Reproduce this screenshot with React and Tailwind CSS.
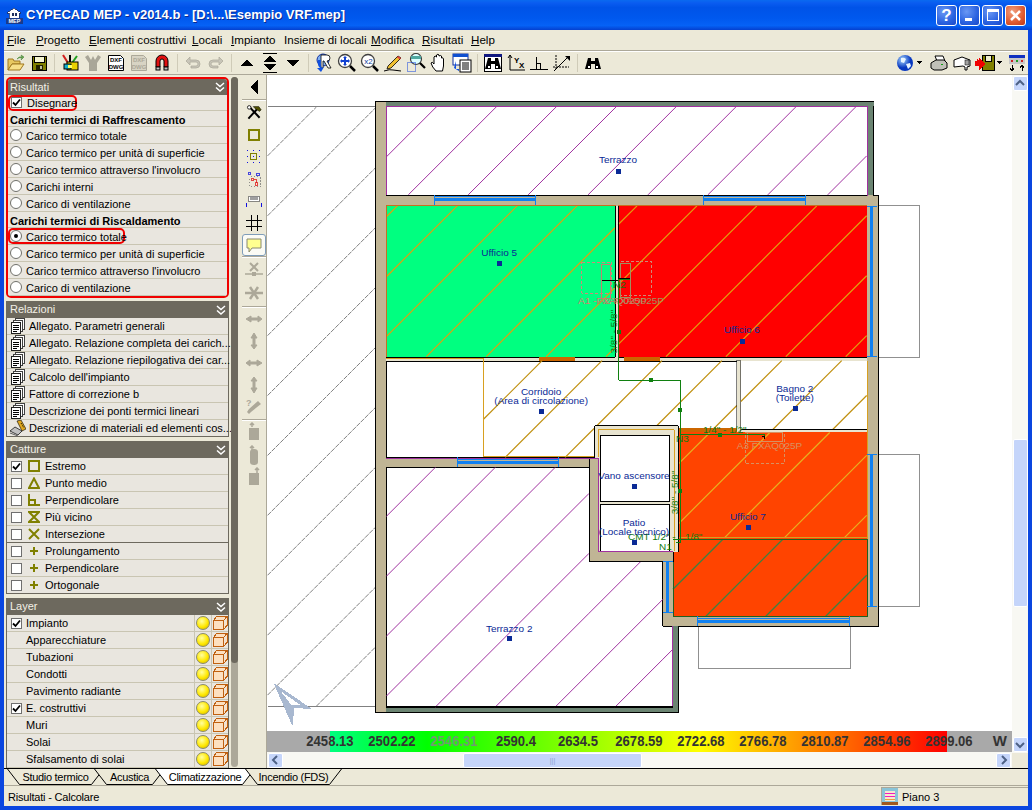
import React from 'react';

const Ico = ({ children, w = 18, h = 18, vb }) => (
  <svg width={w} height={h} viewBox={vb || `0 0 ${w} ${h}`} shapeRendering="crispEdges" className="block shrink-0">
    {children}
  </svg>
);

const Smooth = ({ children, w = 18, h = 18, vb }) => (
  <svg width={w} height={h} viewBox={vb || `0 0 ${w} ${h}`} className="block shrink-0">
    {children}
  </svg>
);

/* top toolbar */
const Folder = () => (
  <Smooth>
    <path d="M1 5h5l1 2h6v3H5L1 16z" fill="#e8c860" stroke="#a07820" />
    <path d="M5 10h12l-4 6H1z" fill="#f8e088" stroke="#a07820" />
    <path d="M10 5q2-3 5-2l-1-2 3 2-3 3 1-2q-3-1-5 1z" fill="#6aa84f" stroke="#3a7a30" strokeWidth="0.5" />
  </Smooth>
);
const Floppy = () => (
  <Ico w={16} h={16}>
    <rect x="1" y="1" width="14" height="14" fill="#808000" stroke="#000" />
    <rect x="3" y="1" width="10" height="6" fill="#f4f4d0" stroke="#000" />
    <rect x="5" y="10" width="7" height="5" fill="#202000" />
    <rect x="9" y="11" width="2" height="3" fill="#c0c0a0" />
  </Ico>
);
const Tools = () => (
  <Smooth>
    <path d="M2 1l5 8" stroke="#d02020" strokeWidth="2" />
    <path d="M9 1v8" stroke="#000" strokeWidth="2" />
    <path d="M16 2l-5 7" stroke="#20a020" strokeWidth="2" />
    <rect x="6" y="8" width="11" height="8" fill="#e8d000" stroke="#000" />
    <rect x="3" y="10" width="7" height="5" fill="#10b0d0" stroke="#000" />
    <rect x="7" y="11" width="4" height="3" fill="#ffff60" />
  </Smooth>
);
const Shirt = () => (
  <Smooth>
    <path d="M1 3l3-2 3 5 2-4 2 4 3-5 3 2-4 6v8H5V9z" fill="#a9a698" />
  </Smooth>
);
const DocText = ({ c = '#000', bg = '#fff' }) => (
  <Smooth>
    <path d="M1.500 1.500h12l3 3v12h-15z" fill={bg} stroke={c} />
    <text x="9" y="8" textAnchor="middle" fontSize="6" fontWeight="700" fontFamily="Liberation Sans" fill={c}>DXF</text>
    <text x="9" y="14.5" textAnchor="middle" fontSize="6" fontWeight="700" fontFamily="Liberation Sans" fill={c}>DWG</text>
  </Smooth>
);
const Magnet = () => (
  <Smooth>
    <path d="M3 13V7a6 6 0 0 1 12 0v6h-4V7a2 2 0 0 0-4 0v6z" fill="#e01010" stroke="#000" />
    <rect x="3" y="13" width="4" height="3" fill="#c0c0c0" stroke="#000" />
    <rect x="11" y="13" width="4" height="3" fill="#c0c0c0" stroke="#000" />
  </Smooth>
);
const Undo = ({ flip }) => (
  <Smooth>
    <g transform={flip ? 'translate(18,0) scale(-1,1)' : undefined}>
      <path d="M2 7l4-4v3h6q4 0 4 4t-4 4H7v-2h5q2 0 2-2t-2-2H6v3z" fill="#c8c5b8" stroke="#a9a698" strokeWidth="0.7" />
    </g>
  </Smooth>
);
const TriUp = () => (
  <Ico w={14} h={14}><path d="M7 3l6 7H1z" fill="#000" /></Ico>
);
const TriDown = () => (
  <Ico w={14} h={14}><path d="M1 4h12l-6 7z" fill="#000" /></Ico>
);
const UpDown = () => (
  <Ico w={16} h={20}>
    <rect x="1" y="0" width="14" height="1" fill="#000" />
    <rect x="1" y="19" width="14" height="1" fill="#000" />
    <path d="M8 2l6 7H2z" fill="#000" />
    <path d="M2 11h12l-6 7z" fill="#000" />
  </Ico>
);
const Lens = ({ children }) => (
  <Smooth w={20} h={20}>
    <circle cx="8" cy="8" r="6.5" fill="#fff" stroke="#404040" strokeWidth="1.3" />
    {children}
    <path d="M13 13l5 5" stroke="#000" strokeWidth="2.5" />
  </Smooth>
);
const GlobeR = () => (
  <Smooth w={20} h={20}>
    <circle cx="9" cy="7" r="6" fill="#80b0f0" stroke="#1030a0" />
    <path d="M7 2h6q3 0 3 3t-3 3l4 7h-3l-4-7H9v7H7z" fill="#fff" stroke="#000" strokeWidth="0.8" />
    <path d="M4 7q-1 5 2 8l-3 0 4 4 3-5-2 1q-2-3-1-8z" fill="#1050e0" />
  </Smooth>
);
const ZoomAll = () => (
  <Lens>
    <path d="M8 3l2 2H6zM8 13l2-2H6zM3 8l2-2v4zM13 8l-2-2v4z" fill="#1040d0" />
    <rect x="7" y="5" width="2" height="6" fill="#1040d0" />
    <rect x="5" y="7" width="6" height="2" fill="#1040d0" />
  </Lens>
);
const ZoomTwo = () => (
  <Lens>
    <text x="8.5" y="11" textAnchor="middle" fontSize="8" fontFamily="Liberation Sans" fill="#1040a0">x2</text>
  </Lens>
);
const Pencil = () => (
  <Smooth w={20} h={20}>
    <path d="M5 13L15 3l3 2L8 15l-4 1z" fill="#f0c030" stroke="#000" strokeWidth="0.8" />
    <path d="M15 3l3 2-1 1.500-3-2z" fill="#e04040" />
    <path d="M1 18q6-2 9-1l8 1" fill="none" stroke="#000" />
  </Smooth>
);
const ZoomBox = () => (
  <Smooth w={20} h={20}>
    <circle cx="10" cy="6" r="5.500" fill="#dff" stroke="#404040" strokeWidth="1.2" />
    <rect x="5" y="3" width="10" height="3" fill="#50a8a0" />
    <path d="M14 10l5 5" stroke="#000" strokeWidth="2.2" />
    <rect x="1.500" y="9.500" width="8" height="9" fill="none" stroke="#1040e0" strokeDasharray="1 1" />
  </Smooth>
);
const Hand = () => (
  <Smooth w={20} h={20}>
    <path d="M7 18Q3 14 2 10q1-2 3 1V4q1-2 2.500 0V2q1.500-1.500 2.500 0v1q1.500-1 2.500 0v2q1.500-1 2 1v7l-1 5z" fill="#fff" stroke="#000" />
  </Smooth>
);
const Pages = () => (
  <Smooth w={20} h={20}>
    <rect x="1" y="1" width="15" height="11" fill="#fff" stroke="#1030a0" />
    <rect x="1" y="1" width="15" height="3" fill="#1050d0" />
    <rect x="8" y="7" width="11" height="12" fill="#fff" stroke="#000" />
    <path d="M10 10h7M10 12h7M10 14h7M10 16h7" stroke="#000" />
    <path d="M4 8v8h3v2l-5-3z" fill="#1050e0" />
  </Smooth>
);
const Binoc = ({ frame }) => (
  <Smooth w={20} h={20}>
    {frame && <rect x="1.500" y="1.500" width="17" height="17" fill="#fff" stroke="#000" />}
    {frame && <rect x="1" y="1" width="18" height="3" fill="#101880" />}
    <path d="M5 5h3v3h4V5h3l3 11h-6v-5H8v5H2z" fill="#000" />
    <rect x="5" y="13" width="2" height="2" fill="#fff" />
    <rect x="13" y="13" width="2" height="2" fill="#fff" />
  </Smooth>
);
const AxisXY = () => (
  <Smooth w={20} h={20}>
    <path d="M4 2v15h15" fill="none" stroke="#000" />
    <path d="M2 5l2-3 2 3" fill="none" stroke="#000" />
    <text x="8" y="10" fontSize="8" fontWeight="700" fontFamily="Liberation Sans" fill="#000">Y</text>
    <text x="13" y="15" fontSize="8" fontWeight="700" fontFamily="Liberation Sans" fill="#000">X</text>
  </Smooth>
);
const Perp = () => (
  <Ico w={20} h={20}>
    <rect x="1" y="16" width="18" height="1" fill="#000" />
    <rect x="7" y="4" width="1" height="12" fill="#000" />
    <path d="M8 10h4v6h-1v-5H8z" fill="#000" />
  </Ico>
);
const Diag = () => (
  <Smooth w={20} h={20}>
    <path d="M4 2v15M1 14h16" stroke="#000" strokeDasharray="2 1" fill="none" />
    <path d="M2 18L17 3" stroke="#000" />
    <path d="M13 3h5v5z" fill="#000" />
  </Smooth>
);
const Globe = () => (
  <Smooth w={18} h={18}>
    <defs>
      <radialGradient id="gl" cx="35%" cy="30%">
        <stop offset="0" stopColor="#a8d8ff" />
        <stop offset="1" stopColor="#0838c0" />
      </radialGradient>
    </defs>
    <circle cx="9" cy="9" r="8" fill="url(#gl)" />
    <path d="M5 4q3-1 5 1l-2 4-3-1zM10 10l4-1 1 3-3 3z" fill="#e8f4ff" />
  </Smooth>
);
const Drop = () => (
  <Ico w={6} h={4}><path d="M0 0h6L3 3z" fill="#000" /></Ico>
);
const Printer = () => (
  <Smooth w={18} h={18}>
    <path d="M5 2l8 0 2 5H7z" fill="#fff" stroke="#000" />
    <path d="M1 9l5-3h8l3 3v5l-5 2H4l-3-2z" fill="#c0c0b8" stroke="#000" />
    <rect x="11" y="10" width="2" height="1" fill="#10a010" />
  </Smooth>
);
const Camera = () => (
  <Smooth w={18} h={18}>
    <path d="M1 6l8-3 8 3v6l-3 1v3h-2v-3l-2-1-9 1z" fill="#fff" stroke="#000" />
    <rect x="12" y="6" width="4" height="5" fill="#a0a0a0" stroke="#000" strokeWidth="0.5" />
  </Smooth>
);
const SaveRed = () => (
  <Ico w={20} h={18}>
    <rect x="7" y="1" width="12" height="15" fill="#808000" stroke="#000" />
    <rect x="10" y="1" width="6" height="6" fill="#f0f0d0" stroke="#000" />
    <path d="M0 7h2V5l2 2V4l7 6-7 6v-3H4v-1L0 12z" fill="#f00000" />
  </Ico>
);
const PanelIco = () => (
  <Ico w={16} h={16}>
    <rect x="0" y="0" width="16" height="3" fill="#1030c0" />
    <rect x="0" y="3" width="16" height="6" fill="#c8c8c8" />
    <rect x="2" y="5" width="2" height="2" fill="#d02020" />
    <rect x="7" y="5" width="2" height="2" fill="#20a020" />
    <rect x="12" y="5" width="2" height="2" fill="#d02020" />
    <path d="M3 16V10M1 13l2 3 2-3" stroke="#000" fill="none" />
    <path d="M13 16V10M11 13l2-3 2 3" stroke="#000" fill="none" />
  </Ico>
);

/* vertical toolbar */
const Gray = '#aca899';
const VArrow = () => <Ico w={10} h={16}><path d="M9 0v16L1 8z" fill="#000" /></Ico>;
const Hammer = () => (
  <Smooth w={16} h={16} vb="0 0 20 20">
    <path d="M3 17L14 5" stroke="#000" strokeWidth="2.500" />
    <path d="M9 2h7l3 4-2 2-5-3z" fill="#505000" stroke="#000" strokeWidth="0.6" />
    <path d="M4 2l13 14" stroke="#000" strokeWidth="2.500" />
    <circle cx="4" cy="3" r="2.200" fill="#fff" stroke="#000" />
  </Smooth>
);
const DotSq = () => (
  <Ico w={14} h={14}>
    {[[0, 0], [6, 0], [12, 0], [0, 6], [12, 6], [0, 12], [6, 12], [12, 12]].map(([x, y]) => (
      <rect key={`${x}-${y}`} x={x} y={y} width="1" height="1" fill="#1010e0" />
    ))}
    <rect x="3.500" y="3.500" width="6" height="6" fill="none" stroke="#808000" />
    <rect x="6" y="6" width="1" height="1" fill="#1010e0" />
  </Ico>
);
const BlueRed = () => (
  <Ico w={15} h={17} vb="0 0 20 22">
    <rect x="1.500" y="1.500" width="3" height="3" fill="none" stroke="#1010e0" strokeWidth="1" />
    <rect x="12.500" y="2.500" width="4" height="3" fill="none" stroke="#1010e0" />
    <rect x="5" y="3" width="7" height="1" fill="#1010e0" />
    <rect x="3.500" y="7.500" width="14" height="13" fill="none" stroke="#707070" strokeDasharray="1 1" />
    <rect x="5.500" y="9.500" width="3" height="3" fill="none" stroke="#e01010" />
    <rect x="11.500" y="15.500" width="3" height="3" fill="none" stroke="#e01010" />
    <path d="M9 11h4v4" stroke="#e01010" fill="none" />
  </Ico>
);
const DimIco = () => (
  <Ico w={16} h={14} vb="0 0 22 16">
    <rect x="3.500" y="1.500" width="15" height="7" fill="#fff" stroke="#606060" />
    <rect x="5" y="3" width="12" height="4" fill="#a0a0a0" />
    <rect x="0" y="13" width="22" height="1" fill="#1010e0" />
    <rect x="0" y="11" width="1" height="5" fill="#1010e0" />
    <rect x="21" y="11" width="1" height="5" fill="#1010e0" />
  </Ico>
);
const GridIco = () => (
  <Ico w={16} h={16}>
    <path d="M5 0v16M11 0v16M0 5h16M0 11h16" stroke="#000" />
  </Ico>
);
const Speech = () => (
  <Smooth w={18} h={18}>
    <path d="M2 3h14v9H7l-3 4v-4H2z" fill="#ffff90" stroke="#8a8a70" />
  </Smooth>
);
const SnapIcon = () => (
  <Ico w={14} h={14}><rect x="2" y="2" width="10" height="10" fill="none" stroke="#808000" strokeWidth="2.500" /></Ico>
);
const DisCross = ({ line }) => (
  <Smooth w={18} h={16}>
    <path d="M5 1l8 8M13 1L5 9" stroke={Gray} strokeWidth="2" />
    <path d={line ? 'M0 12h18' : 'M0 8h18'} stroke={Gray} strokeWidth="1.500" />
    {line && <rect x="7" y="10" width="4" height="4" fill={Gray} />}
  </Smooth>
);
const DisX = () => (
  <Smooth w={18} h={16}>
    <path d="M5 2l8 12M13 2L5 14" stroke={Gray} strokeWidth="2.500" />
    <path d="M0 8h18" stroke={Gray} strokeWidth="2.500" />
  </Smooth>
);
const DisArrow = ({ v, kind }) => (
  <Smooth w={18} h={18}>
    <g transform={v ? 'rotate(90 9 9)' : undefined}>
      <path d={kind === 1 ? 'M1 9l4-3v2h7V6l5 3-5 3v-2H5v2z' : 'M1 9l5-3v2h7V6l4 3-4 3v-2H6v2z'} fill={Gray} stroke={Gray} />
    </g>
  </Smooth>
);
const DisKey = () => (
  <Smooth w={18} h={18}>
    <path d="M13 3l3 3-10 8-2 2-2-2 2-3z" fill={Gray} />
    <text x="1" y="8" fontSize="9" fontWeight="700" fontFamily="Liberation Sans" fill={Gray}>?</text>
  </Smooth>
);
const DisCol = ({ kind }) => (
  <Smooth w={14} h={20}>
    <path d={kind === 2 ? 'M3 7a4 3 0 0 1 8 0v10a4 3 0 0 1-8 0z' : 'M2 6h10v12H2z'} fill={Gray} />
    <path d={kind === 3 ? 'M10 6V1M8 3l2-2 2 2' : 'M5 5V1M3 3l2-2 2 2'} stroke={Gray} fill="none" strokeWidth="1.500" />
  </Smooth>
);

/* side panel bits */
const DoubleChevron = () => (
  <Smooth w={10} h={10}>
    <path d="M1 1l4 3.500L9 1M1 5.500L5 9l4-3.500" fill="none" stroke="#fff" strokeWidth="1.500" />
  </Smooth>
);
const Check = ({ on }) => (
  <span className="flex items-center justify-center w-[11px] h-[11px] border border-[#6f6f6f] bg-white shrink-0">
    {on && (
      <Smooth w={9} h={9}>
        <path d="M1 4.500l2.500 2.500L8 1.500" fill="none" stroke="#000" strokeWidth="1.800" />
      </Smooth>
    )}
  </span>
);
const Radio = ({ on }) => (
  <span className="flex items-center justify-center w-[12px] h-[12px] rounded-full border border-[#70706a] bg-white shrink-0">
    {on && <span className="block w-[4px] h-[4px] rounded-full bg-black" />}
  </span>
);
const Stack = () => (
  <Ico w={15} h={16}>
    <rect x="5.500" y="0.500" width="9" height="11" fill="#fff" stroke="#404040" />
    <rect x="3.500" y="2.500" width="9" height="11" fill="#fff" stroke="#404040" />
    <rect x="1.500" y="4.500" width="9" height="11" fill="#fff" stroke="#202020" />
    <path d="M3 7h6M3 9h6M3 11h6M3 13h4" stroke="#000" />
  </Ico>
);
const Books = () => (
  <Smooth w={16} h={16}>
    <path d="M7 1l4-1 5 9-4 2z" fill="#e0a820" stroke="#000" strokeWidth="0.6" />
    <path d="M11 3l3 5" stroke="#000" strokeDasharray="1 1" />
    <path d="M0 11l5-4 7 4-4 4z" fill="#c0c0c0" stroke="#000" strokeWidth="0.7" />
    <path d="M0 13l8 3" stroke="#606060" />
  </Smooth>
);
const ol = '#808000';
const SnapIcons = {
  square: <Ico w={12} h={12}><rect x="1" y="1" width="10" height="10" fill="none" stroke={ol} strokeWidth="2" /></Ico>,
  tri: <Smooth w={12} h={12}><path d="M6 1.500L11 11H1z" fill="none" stroke={ol} strokeWidth="2" /></Smooth>,
  perp: <Ico w={12} h={12}><path d="M1 0v11h11M1 6h6v5" fill="none" stroke={ol} strokeWidth="2" /></Ico>,
  hour: <Smooth w={12} h={12}><path d="M1 1h10L1 11h10z" fill="none" stroke={ol} strokeWidth="2" /></Smooth>,
  cross: <Smooth w={12} h={12}><path d="M1 1l10 10M11 1L1 11" fill="none" stroke={ol} strokeWidth="2" /></Smooth>,
  plus: <Ico w={12} h={12}><path d="M6 2v8M2 6h8" fill="none" stroke={ol} strokeWidth="2" /></Ico>,
};
const Bulb = () => (
  <span className="block w-[14px] h-[14px] rounded-full border border-[#8a8a6a] bg-[radial-gradient(circle_at_40%_35%,#ffffa0,#ffe800_55%,#c8a800)]" />
);
const Cube = () => (
  <Ico w={15} h={14}>
    <path d="M0.500 4.500h10v9h-10zM0.500 4.500l3-4h10.500l-3.500 4M10.500 13.500l3.500-4v-9" fill="#fde0c0" stroke="#c06010" />
  </Ico>
);
const Head = ({ title }) => (
  <div className="flex items-center justify-between h-[17px] pl-[4px] pr-[3px] bg-[#6d695e] text-[#f2f0e6]">
    <span>{title}</span>
    <DoubleChevron />
  </div>
);
const rowCls = 'flex items-center h-[17px] border-b border-[#c9c5b2] bg-[#e9e6df] whitespace-nowrap';
const boldCls = 'flex items-center h-[16px] pl-[2px] pt-[3px] border-b border-[#c9c5b2] bg-[#e9e6df] font-bold text-black whitespace-nowrap';

const cool = ['Carico termico totale', 'Carico termico per unità di superficie', "Carico termico attraverso l'involucro", 'Carichi interni', 'Carico di ventilazione'];
const heat = ['Carico termico per unità di superficie', "Carico termico attraverso l'involucro", 'Carico di ventilazione'];
const reports = [
  'Allegato. Parametri generali',
  'Allegato. Relazione completa dei carich...',
  'Allegato. Relazione riepilogativa dei car...',
  "Calcolo dell'impianto",
  'Fattore di correzione b',
  'Descrizione dei ponti termici lineari',
];
const snaps = [
  ['Estremo', 'square', true],
  ['Punto medio', 'tri'],
  ['Perpendicolare', 'perp'],
  ['Più vicino', 'hour'],
  ['Intersezione', 'cross'],
  ['Prolungamento', 'plus'],
  ['Perpendicolare', 'plus'],
  ['Ortogonale', 'plus'],
];
const layers = [
  ['Impianto', true, true],
  ['Apparecchiature'],
  ['Tubazioni'],
  ['Condotti'],
  ['Pavimento radiante'],
  ['E. costruttivi', true, true],
  ['Muri'],
  ['Solai'],
  ['Sfalsamento di solai'],
];

const Risultati = () => (
  <div className="h-[221px] border-2 border-[#f00000] rounded-[5px] overflow-hidden">
    <div className="flex items-center justify-between h-[16px] pl-[2px] pr-[2px] bg-[#6d695e] text-[#f2f0e6]">
      <span>Risultati</span>
      <DoubleChevron />
    </div>
    <div className="flex items-center h-[16px] border-b border-[#c9c5b2] bg-[#e9e6df]">
      <span className="flex items-center w-[69px] h-[16px] border-2 border-[#f00000] rounded-[5px] pl-[1px] gap-[5px] whitespace-nowrap">
        <Check on />
        <span className="leading-none pt-[2px]">Disegnare</span>
      </span>
    </div>
    <div className={boldCls}>Carichi termici di Raffrescamento</div>
    {cool.map((t) => (
      <div key={t} className={`${rowCls} pl-[2px] gap-[4px]`}><Radio /><span className="pt-[2px]">{t}</span></div>
    ))}
    <div className={boldCls}>Carichi termici di Riscaldamento</div>
    <div className="flex items-center h-[17px] border-b border-[#c9c5b2] bg-[#e9e6df]">
      <span className="flex items-center w-[117px] h-[16px] border-2 border-[#f00000] rounded-[5px] gap-[4px] whitespace-nowrap">
        <Radio on />
        <span className="leading-none pt-[2px]">Carico termico totale</span>
      </span>
    </div>
    {heat.map((t) => (
      <div key={t} className={`${rowCls} pl-[2px] gap-[4px]`}><Radio /><span className="pt-[2px]">{t}</span></div>
    ))}
  </div>
);

const Relazioni = () => (
  <div className="mt-[3px]">
    <Head title="Relazioni" />
    <div className="border-x border-[#6d695e]">
      {reports.map((t) => (
        <div key={t} className={`${rowCls} pl-[3px] gap-[4px]`}><Stack /><span>{t}</span></div>
      ))}
      <div className={`${rowCls} pl-[3px] gap-[3px] border-b-[#6d695e]`}><Books /><span>Descrizione di materiali ed elementi cos...</span></div>
    </div>
  </div>
);

const Catture = () => (
  <div className="mt-[4px]">
    <Head title="Catture" />
    <div className="border-x border-[#6d695e]">
      {snaps.map(([t, icon, on], i) => (
        <div key={`${t}-${i}`} className={i === 4 || i === 7 ? `${rowCls} border-b-[#6d695e]` : rowCls}>
          <span className="ml-[4px]"><Check on={on} /></span>
          <span className="ml-[6px] mr-[5px]">{SnapIcons[icon]}</span>
          <span>{t}</span>
        </div>
      ))}
    </div>
  </div>
);

const Layer = () => (
  <div className="mt-[4px]">
    <Head title="Layer" />
    <div className="border-x border-[#6d695e]">
      {layers.map(([t, hasCheck, on]) => (
        <div key={t} className={rowCls}>
          <span className="flex items-center gap-[4px] flex-1 pl-[4px]">
            {hasCheck ? <Check on={on} /> : <span className="w-[11px]" />}
            <span>{t}</span>
          </span>
          <span className="flex items-center justify-center w-[17px] h-full border-l border-[#c9c5b2]"><Bulb /></span>
          <span className="flex items-center justify-center w-[17px] h-full border-l border-[#c9c5b2]"><Cube /></span>
        </div>
      ))}
    </div>
  </div>
);

const Sidebar = () => (
  <div className="flex w-[238px] h-full bg-[#ece9d8] overflow-hidden">
    <div className="w-[223px] ml-[2px] pt-[2px] shrink-0">
      <Risultati />
      <Relazioni />
      <Catture />
      <Layer />
    </div>
    <div className="w-[7px] ml-[2px] mt-[2px] mb-[1px] rounded-full bg-[#aca899] shrink-0">
      <div className="h-[586px] rounded-full bg-[#6d695e]" />
    </div>
  </div>
);

const TB = ({ children }) => <div className="flex items-center justify-center w-[23px] h-full shrink-0">{children}</div>;
const Sep = () => <div className="w-[8px] h-full flex justify-center py-[2px] shrink-0"><div className="w-[1px] h-full bg-[#cfcbb8]" /></div>;

const TopToolbar = () => (
  <div className="flex items-center h-[23px] bg-[#ece9d8] border-t border-white">
    <TB><Folder /></TB><TB><Floppy /></TB><Sep />
    <TB><Tools /></TB><TB><Shirt /></TB><TB><DocText /></TB><TB><DocText c="#aca899" bg="#d8d4c4" /></TB><TB><Magnet /></TB><Sep />
    <TB><Undo /></TB><TB><Undo flip /></TB><Sep />
    <TB><TriUp /></TB><TB><UpDown /></TB><TB><TriDown /></TB><Sep />
    <TB><GlobeR /></TB><TB><ZoomAll /></TB><TB><ZoomTwo /></TB><TB><Pencil /></TB><TB><ZoomBox /></TB><TB><Hand /></TB><TB><Pages /></TB><Sep />
    <TB><Binoc frame /></TB><TB><AxisXY /></TB><TB><Perp /></TB><TB><Diag /></TB><Sep />
    <TB><Binoc /></TB>
    <div className="ml-auto flex items-center pr-[3px]">
      <Globe /><span className="mx-[2px]"><Drop /></span>
      <span className="ml-[6px]"><Printer /></span>
      <span className="ml-[5px]"><Camera /></span>
      <span className="ml-[4px]"><SaveRed /></span><span className="ml-[1px]"><Drop /></span>
      <span className="ml-[7px]"><PanelIco /></span>
    </div>
  </div>
);

const VB = ({ children, h = 'h-[22px]' }) => <div className={`flex items-center justify-center ${h}`}>{children}</div>;
const VSep = () => <div className="h-[2px] bg-[#aca899] border-b border-white" />;

const VToolbar = () => (
  <div className="w-[25px] h-full bg-[#ece9d8] border-r border-[#aca899] shrink-0">
    <VB h="h-[24px]"><VArrow /></VB>
    <VSep />
    <div className="h-[1px]" />
    <VB><Hammer /></VB>
    <VB><SnapIcon /></VB>
    <VB><DotSq /></VB>
    <VB><BlueRed /></VB>
    <VB><DimIco /></VB>
    <VB><GridIco /></VB>
    <div className="flex items-center justify-center h-[22px] rounded-[3px] border border-[#7f9db9] bg-[#fbfbf5]"><Speech /></div>
    <VSep />
    <VB h="h-[23px]"><DisCross line /></VB>
    <VB h="h-[23px]"><DisX /></VB>
    <div className="h-[2px]" />
    <VSep />
    <VB><DisArrow /></VB>
    <VB><DisArrow v /></VB>
    <VB><DisArrow kind={1} /></VB>
    <VB><DisArrow v kind={1} /></VB>
    <VB><DisKey /></VB>
    <div className="h-[1px]" />
    <VSep />
    <VB><DisCol kind={1} /></VB>
    <VB h="h-[23px]"><DisCol kind={2} /></VB>
    <VB><DisCol kind={3} /></VB>
  </div>
);

/* the plan */
// diagonal hatch: lines x+y=c every 60px, cut by hand to the rects [x0,x1,y0,y1]
const Hatch = ({ rects, stroke, dash, sw = 1 }) => {
  let d = '';
  rects.forEach(([x0, x1, y0, y1]) => {
    const first = Math.ceil((x0 + y0 - 3) / 60) * 60 + 3;
    for (let c = first; c <= x1 + y1; c += 60) {
      const a = Math.max(x0, c - y1);
      const b = Math.min(x1, c - y0);
      if (b > a) d += `M${a} ${c - a}L${b} ${c - b}`;
    }
  });
  return <path d={d} fill="none" stroke={stroke} strokeWidth={sw} strokeDasharray={dash} shapeRendering="auto" />;
};
const planFont = "'Liberation Sans',sans-serif";
const Mark = ({ x, y }) => <rect x={x - 2} y={y - 2} width="5" height="5" fill="#0a2a96" />;
const Lbl = ({ x, y, children }) => (
  <text x={x} y={y} textAnchor="middle" fontSize="10" fontFamily={planFont} fill="#0a2a96">{children}</text>
);
const Grn = ({ x, y, children, anchor = 'start', rot }) => (
  <text x={x} y={y} textAnchor={anchor} fontSize="10" fontFamily={planFont} fill="#107a10" transform={rot ? `rotate(-90 ${x} ${y})` : undefined}>{children}</text>
);
const HWin = ({ x1, x2, y }) => (
  <g stroke="#1080f0">
    <line x1={x1} y1={y - 5} x2={x1} y2={y + 5} />
    <line x1={x2} y1={y - 5} x2={x2} y2={y + 5} />
    <line x1={x1} y1={y} x2={x2} y2={y} strokeWidth="3" />
    <line x1={x1} y1={y - 3} x2={x2} y2={y - 3} />
  </g>
);
const VWin = ({ x, y1, y2 }) => (
  <g stroke="#1080f0">
    <line x1={x - 5} y1={y1} x2={x + 5} y2={y1} />
    <line x1={x - 5} y1={y2} x2={x + 5} y2={y2} />
    <line x1={x} y1={y1} x2={x} y2={y2} strokeWidth="3" />
  </g>
);
const Node = ({ x, y }) => <rect x={x - 1.500} y={y - 1.500} width="4" height="4" fill="#108010" />;
const tan = '#c0b595';
const light = '#e8e4d0';
const band = '#6b8472';

const Plan = () => (
  <svg width="745" height="657" viewBox="267 75 745 657" shapeRendering="crispEdges" className="block bg-white">
    <Hatch rects={[[267, 375, 107, 707]]} stroke="#808080" dash="5 1" />
    <line x1="267" y1="106.500" x2="375" y2="106.500" stroke="#808080" />
    <line x1="267" y1="707.500" x2="375" y2="707.500" stroke="#808080" />

    <rect x="878.500" y="205.500" width="41" height="152" fill="#fff" stroke="#909090" />
    <rect x="878.500" y="455.500" width="41" height="152" fill="#fff" stroke="#909090" />
    <rect x="698.500" y="627.500" width="152" height="42" fill="#fff" stroke="#909090" />

    <path d="M375.500 101.500H873.500V195.500H878.500V627.500H678.500V713.500H375.500z" fill={tan} stroke="#000" />
    <rect x="386" y="102" width="488" height="4" fill={band} />
    <rect x="867" y="102" width="6" height="93" fill={band} />
    <rect x="386" y="708" width="292" height="5" fill={band} />
    <rect x="673" y="627" width="5" height="85" fill={band} />

    <rect x="386" y="106" width="481" height="89" fill="#fff" />
    <Hatch rects={[[386, 867, 106, 195]]} stroke="#a030a0" />
    <rect x="386.500" y="106.500" width="481" height="89" fill="none" stroke="#a030a0" />
    <line x1="386" y1="195.500" x2="867" y2="195.500" stroke="#000" />

    <path d="M386 468H589V562H663V627H673V708H386z" fill="#fff" stroke="#000" />
    <Hatch rects={[[386, 589, 468, 708], [589, 663, 562, 708], [663, 673, 627, 708]]} stroke="#a030a0" />
    <line x1="672.500" y1="627" x2="672.500" y2="708" stroke="#a030a0" />
    <line x1="386" y1="707.500" x2="673" y2="707.500" stroke="#000" />

    <rect x="386" y="206" width="229" height="151" fill="#00ff80" />
    <rect x="618" y="206" width="249" height="151" fill="#ff0000" />
    <rect x="615" y="206" width="3" height="155" fill={light} />
    <rect x="386" y="357" width="481" height="4" fill={light} />
    <Hatch rects={[[386, 615, 206, 357], [618, 867, 206, 357]]} stroke="#e0a010" sw={1.2} />
    <path d="M386.500 205.500H615.500M617.500 205.500H867M386.500 205V357.500" stroke="#c87020" fill="none" />
    <path d="M386 357.500H615V206M618 206V357.500H867" stroke="#000" fill="none" />
    <rect x="539" y="357" width="36" height="4" fill="#cc6600" />
    <rect x="624" y="357" width="36" height="4" fill="#cc6600" />

    <path d="M386.500 361.500H737.500V430.500H678V426.500H594.500V458.500H386.500z" fill="#fff" stroke="#000" />
    <Hatch rects={[[483, 594, 361, 458], [594, 737, 361, 426], [678, 737, 426, 430]]} stroke="#c09010" sw={1.2} />
    <path d="M386 358.500H483.500V457.500H598.500V430.500H674.500V538" fill="none" stroke="#d8a020" />
    <rect x="737" y="361" width="4" height="72" fill={light} stroke="#000" strokeWidth="0.5" />
    <rect x="741" y="361" width="126" height="69" fill="#fff" />
    <Hatch rects={[[741, 867, 361, 430]]} stroke="#c09010" sw={1.2} />
    <line x1="741" y1="430.500" x2="867" y2="430.500" stroke="#000" />
    <rect x="741" y="431" width="126" height="2" fill={light} />
    <rect x="678" y="429" width="59" height="4" fill="#cc6600" />

    <rect x="673" y="433" width="194" height="184" fill="#ff4400" />
    <Hatch rects={[[673, 867, 433, 538]]} stroke="#e8b020" sw={1.2} />
    <Hatch rects={[[673, 867, 540, 617]]} stroke="#3f8040" sw={1.3} />
    <line x1="673" y1="538.500" x2="867" y2="538.500" stroke="#d8a020" />
    <rect x="673.500" y="540.500" width="194" height="77" fill="none" stroke="#206020" />
    <line x1="867.500" y1="361" x2="867.500" y2="540" stroke="#d8a020" />

    <rect x="589.500" y="458.500" width="84" height="104" fill={tan} stroke="#000" />
    <rect x="598" y="426.500" width="80" height="126" fill={light} />
    <path d="M594.500 458V426.500H678.500V552.500" fill="none" stroke="#000" />
    <rect x="594.500" y="427" width="4" height="32" fill={light} />
    <path d="M598.500 431V458" stroke="#d8a020" />
    <path d="M598 430.500H674.500V552" fill="none" stroke="#d8a020" />
    <rect x="600.500" y="436.500" width="69" height="66" fill="#fff" stroke="#000" />
    <rect x="600.500" y="505.500" width="69" height="47" fill="#fff" stroke="#000" />
    <path d="M386 459.500H598.500V552.500H673" fill="none" stroke="#a030a0" />

    <HWin x1={434} x2={535} y={200} />
    <HWin x1={704} x2={806} y={200} />
    <HWin x1={457} x2={558} y={463} />
    <HWin x1={698} x2={850} y={622} />
    <VWin x={872} y1={207} y2={357} />
    <VWin x={872} y1={455} y2={607} />
    <VWin x={668} y1={562} y2={613} />

    <g fill="none" stroke="#d08878">
      <rect x="581.500" y="262.500" width="30" height="31" strokeDasharray="3 2" />
      <rect x="620.500" y="261.500" width="31" height="34" strokeDasharray="3 2" />
      <rect x="601.500" y="264.500" width="9" height="34" stroke="#c08070" />
    </g>
    <rect x="620.500" y="263.500" width="10" height="34" fill="none" stroke="#a09060" />
    <rect x="745.500" y="433.500" width="39" height="31" fill="none" stroke="#d89060" strokeDasharray="3 2" />
    <rect x="747.500" y="433.500" width="35" height="9" fill="none" stroke="#d89060" />
    <g fontSize="10" fontFamily={planFont}>
      <text x="578" y="304" fill="#d88070">A1 -FXAQ025P</text>
      <text x="598" y="304" fill="#a09060">A2-FXAQ025P</text>
      <text x="737" y="450" fill="#d89060">A3 FXAQ025P</text>
    </g>

    <g fill="none" stroke="#108010">
      <path d="M602 281H618.500V380.500H680.500V543.500H676" />
      <path d="M630 280H618M680 435.500H765V440" />
      <path d="M673 540.500H680" />
    </g>
    <path d="M602 281H618M618 279H630M762 437H765V440" stroke="#000" fill="none" />
    <Node x={618} y={332} />
    <Node x={651} y={380} />
    <Node x={680} y={410} />
    <Node x={720} y={435} />
    <Node x={680} y={491} />
    <Grn x={613} y={288}>N2</Grn>
    <Grn x={676} y={443}>N3</Grn>
    <Grn x={703} y={434}>1/4" - 1/2"</Grn>
    <Grn x={617} y={332} rot anchor="middle">3/8" - 5/8"</Grn>
    <Grn x={678} y={493} rot anchor="middle">3/8" - 5/8"</Grn>
    <Grn x={628} y={541}>CMT 1/2" -</Grn>
    <Grn x={685} y={541}>1/8"</Grn>
    <Grn x={659} y={551}>N1</Grn>

    <Lbl x={618} y={163}>Terrazzo</Lbl><Mark x={618} y={171} />
    <Lbl x={499} y={256}>Ufficio 5</Lbl><Mark x={499} y={263} />
    <Lbl x={742} y={333}>Ufficio 6</Lbl><Mark x={742} y={341} />
    <Lbl x={541} y={395}>Corridoio</Lbl><Lbl x={541} y={404}>(Area di circolazione)</Lbl><Mark x={541} y={411} />
    <Lbl x={795} y={392}>Bagno 2</Lbl><Lbl x={795} y={401}>(Toilette)</Lbl><Mark x={795} y={408} />
    <Lbl x={634} y={480}>Vano ascensore</Lbl><Mark x={634} y={487} />
    <Lbl x={634} y={527}>Patio</Lbl><Lbl x={634} y={536}>(Locale tecnico)</Lbl><Mark x={634} y={543} />
    <Lbl x={748} y={521}>Ufficio 7</Lbl><Mark x={748} y={528} />
    <Lbl x={509} y={633}>Terrazzo 2</Lbl><Mark x={509} y={639} />

    <path d="M274 685L311 710 293 708 292 726z" fill="#a8b8d0" stroke="#a8b8d0" />
    <path d="M280 692L300 706 291 706z" fill="#fff" />
  </svg>
);

const values = ['2458.13', '2502.22', '2546.31', '2590.4', '2634.5', '2678.59', '2722.68', '2766.78', '2810.87', '2854.96', '2899.06'];

const Legend = () => (
  <div className="flex items-center h-[21px] pl-[32px] overflow-hidden bg-[linear-gradient(90deg,#a9a9a9_63px,#00ff80_63px,#00ff00_160px,#ffff00_432px,#ff0000_680px,#a9a9a9_680px)] font-bold text-[15px] text-[#333]">
    {values.map((v, i) => (
      <span key={v} className={i === 2 ? 'w-[61.9px] shrink-0 text-center scale-x-[0.87] text-[#6f9c6f]' : 'w-[61.9px] shrink-0 text-center scale-x-[0.87]'}>{v}</span>
    ))}
    <span className="w-[20px] ml-[10px] shrink-0 text-center">W</span>
  </div>
);

const Chevron = ({ dir }) => {
  const d = { up: 'M2 7l4-4 4 4', down: 'M2 4l4 4 4-4', left: 'M7 2L3 6l4 4', right: 'M4 2l4 4-4 4' }[dir];
  return (
    <Smooth w={12} h={12}>
      <path d={d} fill="none" stroke="#4d6185" strokeWidth="2" />
    </Smooth>
  );
};
const ScBtn = ({ dir }) => (
  <div className="flex items-center justify-center w-[15px] h-[15px] rounded-[2px] border border-white bg-[#c5d5fa] shrink-0"><Chevron dir={dir} /></div>
);

const HScroll = () => (
  <div className="flex items-center justify-between h-[16px] px-[1px] bg-[#f8f8f3]">
    <ScBtn dir="left" />
    <div className="flex items-center justify-center w-[179px] h-[15px] ml-[179px] mr-[353px] rounded-[2px] border border-white bg-[#c5d5fa] text-[#8aa0d0] text-[7px] leading-none">|||</div>
    <ScBtn dir="right" />
  </div>
);
const VScroll = () => (
  <div className="flex flex-col w-[16px] h-full shrink-0 bg-[#ece9d8]">
    <div className="flex flex-col items-center justify-between h-[678px] py-[1px] bg-[#f8f8f3]">
      <ScBtn dir="up" />
      <div className="w-[15px] h-[168px] mt-[346px] mb-[128px] rounded-[2px] border border-white bg-[#c5d5fa]" />
      <ScBtn dir="down" />
    </div>
  </div>
);

const Tab = ({ label, active, w, first }) => (
  <div className={first ? 'relative flex items-center justify-center h-[16px] shrink-0' : 'relative flex items-center justify-center h-[16px] shrink-0 -ml-[10px]'} style={{ width: w }}>
    <svg width={w} height="16" viewBox={`0 0 ${w} 16`} className="absolute inset-0">
      <path d={`M0.500 0L12.500 15.500H${w - 12.5}L${w - 0.5} 0`} fill={active ? '#fff' : '#ece9d8'} stroke="#000" />
    </svg>
    <span className="relative leading-none tracking-[-0.3px]">{label}</span>
  </div>
);

const Tabs = () => (
  <div className="flex h-[17px] bg-[#ece9d8] border-t border-black pl-[3px]">
    <Tab first label="Studio termico" w={97} />
    <Tab label="Acustica" w={71} />
    <Tab label="Climatizzazione" active w={100} />
    <Tab label="Incendio (FDS)" w={97} />
  </div>
);

const StatusBar = () => (
  <div className="flex items-center h-[20px] bg-[#ece9d8] border-t border-[#aca899]">
    <span className="pl-[4px] pt-[3px] tracking-[-0.2px]">Risultati - Calcolare</span>
    <div className="ml-auto flex items-center gap-[4px] w-[147px] h-[18px] mt-[1px] border-t border-l border-[#aca899]">
      <Ico w={16} h={17}>
        <rect width="16" height="17" fill="#8ac4d8" />
        <rect x="3" y="3" width="10" height="10" fill="#f8e8d0" />
        <path d="M3 5h10M3 8h10" stroke="#f020c0" />
        <path d="M3 11h10" stroke="#e8a040" />
        <rect y="14" width="16" height="3" fill="#a05820" />
      </Ico>
      <span className="leading-none pt-[1px]">Piano 3</span>
    </div>
  </div>
);

const TitleBtn = ({ children, red }) => (
  <div className={red
    ? 'flex items-center justify-center w-[21px] h-[21px] rounded-[3px] border border-white bg-[radial-gradient(circle_at_35%_30%,#f0a080,#e05a30_60%,#c03818)] shrink-0'
    : 'flex items-center justify-center w-[21px] h-[21px] rounded-[3px] border border-white bg-[radial-gradient(circle_at_35%_30%,#6a98f4,#2a62e0_60%,#1a48c8)] shrink-0'}>
    {children}
  </div>
);

const TitleBar = () => (
  <div className="flex items-center h-[30px] pl-[6px] pr-[6px] bg-[linear-gradient(180deg,#0a6af0_0%,#0a5cf0_10%,#0053e8_25%,#0058ee_60%,#0562f6_85%,#0440d0_100%)]">
    <Ico w={17} h={17}>
      <path d="M8 1L1 6h2v5h10V6h2z" fill="#fff" stroke="#203060" strokeWidth="0.8" />
      <path d="M6 6h2v3H6zM9 6h2v3H9z" fill="#203060" />
      <rect x="0" y="11" width="17" height="6" fill="#1a3a8a" />
      <text x="8.500" y="16.200" textAnchor="middle" fontSize="5.500" fontWeight="700" fontFamily="Liberation Sans" fill="#fff">MEP</text>
    </Ico>
    <span className="ml-[3px] font-bold text-[13px] text-white [text-shadow:1px_1px_0_#0a2a90] whitespace-nowrap">CYPECAD MEP - v2014.b - [D:\...\Esempio VRF.mep]</span>
    <div className="ml-auto flex gap-[2px]">
      <TitleBtn><span className="font-bold text-[17px] leading-none text-white">?</span></TitleBtn>
      <TitleBtn><span className="block w-[7px] h-[3px] mt-[9px] -ml-[3px] bg-white" /></TitleBtn>
      <TitleBtn><span className="block w-[12px] h-[12px] border border-white border-t-[3px]" /></TitleBtn>
      <TitleBtn red>
        <Smooth w={13} h={13}>
          <path d="M2 2l9 9M11 2l-9 9" stroke="#fff" strokeWidth="2.500" />
        </Smooth>
      </TitleBtn>
    </div>
  </div>
);

const menus = [
  ['F', 'ile', 'w-[29px]'],
  ['P', 'rogetto', 'w-[53px]'],
  ['E', 'lementi costruttivi', 'w-[103px]'],
  ['L', 'ocali', 'w-[39px]'],
  ['I', 'mpianto', 'w-[53px]'],
  ['', 'Insieme di locali', 'w-[87px]'],
  ['M', 'odifica', 'w-[51px]'],
  ['R', 'isultati', 'w-[49px]'],
  ['H', 'elp', 'w-[30px]'],
];

const MenuBar = () => (
  <div className="flex items-center h-[21px] pl-[3px] bg-[#ece9d8] border-b border-[#aca899] text-[11.6px]">
    {menus.map(([a, b, w]) => (
      <span key={b} className={`${w} whitespace-nowrap`}>
        <span className="underline">{a}</span>{b}
      </span>
    ))}
  </div>
);

export default function App() {
  return (
    <div className="w-[1032px] h-[810px] flex flex-col overflow-hidden bg-[#0a46e0] font-['Liberation_Sans',sans-serif] text-[11px] text-black">
      <TitleBar />
      <div className="flex flex-col flex-1 mx-[4px] mb-[4px] bg-[#ece9d8]">
        <MenuBar />
        <TopToolbar />
        <div className="flex h-[694px] border-t border-[#aca899]">
          <Sidebar />
          <VToolbar />
          <div className="flex flex-col w-[745px] shrink-0">
            <Plan />
            <Legend />
            <HScroll />
          </div>
          <VScroll />
        </div>
        <Tabs />
        <StatusBar />
      </div>
    </div>
  );
}
